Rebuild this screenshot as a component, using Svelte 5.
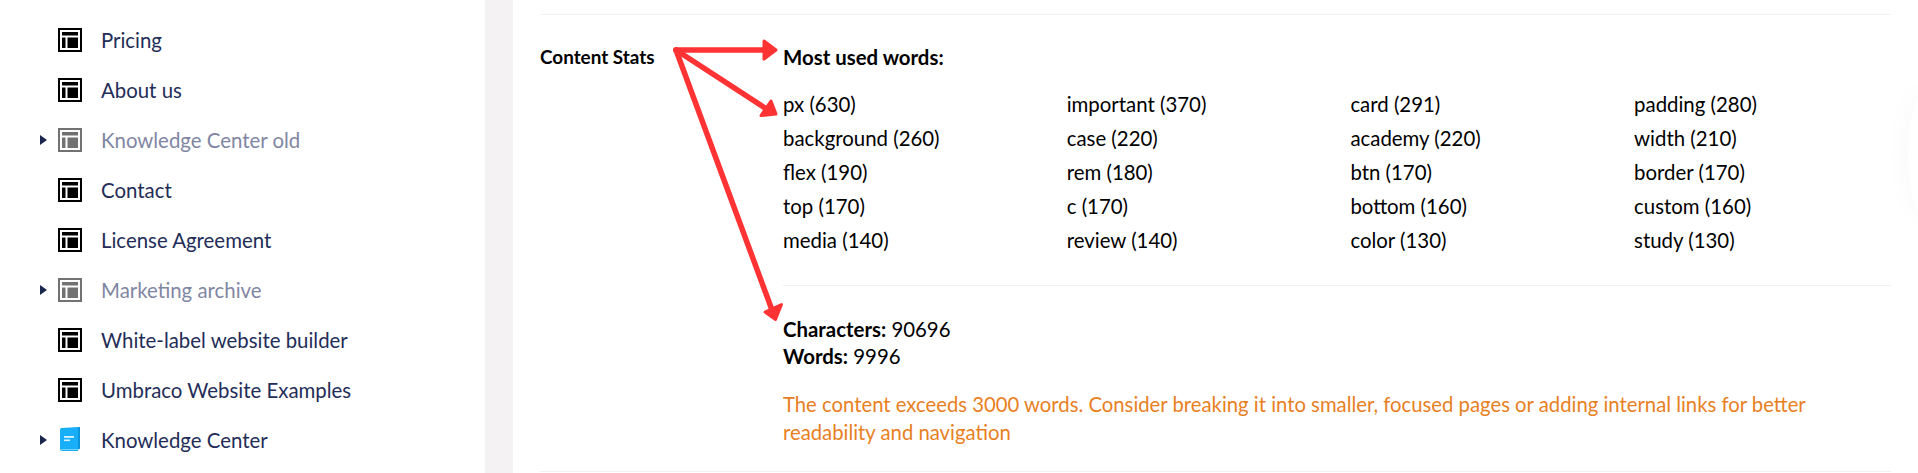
<script>
  const items = [
    { label: 'Pricing' },
    { label: 'About us' },
    { label: 'Knowledge Center old', caret: true, muted: true },
    { label: 'Contact' },
    { label: 'License Agreement' },
    { label: 'Marketing archive', caret: true, muted: true },
    { label: 'White-label website builder' },
    { label: 'Umbraco Website Examples' },
    { label: 'Knowledge Center', caret: true, book: true }
  ];
  const words = [
    'px (630)', 'important (370)', 'card (291)', 'padding (280)',
    'background (260)', 'case (220)', 'academy (220)', 'width (210)',
    'flex (190)', 'rem (180)', 'btn (170)', 'border (170)',
    'top (170)', 'c (170)', 'bottom (160)', 'custom (160)',
    'media (140)', 'review (140)', 'color (130)', 'study (130)'
  ];
</script>

<div class="page">
  <nav class="tree">
    {#each items as item}
      <div class="row" class:muted={item.muted}>
        <span class="caret">
          {#if item.caret}
            <svg width="7" height="10" viewBox="0 0 7 10"><path d="M0 0 L7 5 L0 10 Z" fill="#1b264f" /></svg>
          {/if}
        </span>
        {#if item.book}
          <svg class="icon" width="24" height="24" viewBox="0 0 24 24">
            <path d="M2 1.5 Q2 0 3.5 0 L20 -1 L22 -1 L22 20.5 L20 21.5 L20 23 L4 23 Q2 23 2 21 Z" fill="#18aef8" />
            <path d="M20 0 L22 -1 L22 20.5 L20 21.5 Z" fill="#0b93dc" />
            <rect x="3" y="21" width="17" height="0.8" fill="#8fdcff" />
            <rect x="6" y="8" width="10" height="1.8" fill="#d9f2ff" />
            <rect x="6" y="11.5" width="6" height="1.6" fill="#d9f2ff" />
          </svg>
        {:else}
          <svg class="icon" width="24" height="24" viewBox="0 0 24 24">
            <path fill-rule="evenodd" d="M0 0 H24 V24 H0 Z M2 2 V22 H22 V2 Z" fill="#000" />
            <rect x="4" y="4" width="16" height="3.5" fill="#000" />
            <rect x="4" y="9.5" width="3.5" height="10.5" fill="#000" />
            <rect x="9.5" y="9.5" width="10.5" height="10.5" fill="#000" />
          </svg>
        {/if}
        <span class="label">{item.label}</span>
      </div>
    {/each}
  </nav>

  <div class="gutter"></div>

  <main class="main">
    <section class="property">
      <div class="name">Content Stats</div>
      <div class="value">
        <div class="heading">Most used words:</div>
        <div class="words">
          {#each words as w}<span>{w}</span>{/each}
        </div>
        <div class="counts">
          <div><b>Characters:</b> 90696</div>
          <div><b>Words:</b> 9996</div>
          <p class="warn">The content exceeds 3000 words. Consider breaking it into smaller, focused pages or adding internal links for better readability and navigation</p>
        </div>
      </div>
    </section>
  </main>

  <div class="glow"></div>

  <svg class="arrows" width="1918" height="473" viewBox="0 0 1918 473">
    <g stroke="#ff3333" stroke-width="5.5" stroke-linecap="round" fill="none">
      <path d="M676 50 H765" />
      <path d="M676 50 L765 108" />
      <path d="M676 50 L772 310" />
    </g>
    <g fill="#ff3333" stroke="#ff3333" stroke-width="3" stroke-linejoin="round">
      <path d="M764 41 L776 50 L764 59 Z" />
      <path d="M771 101 L776 114 L761 115.5 Z" />
      <path d="M781.5 304.5 L775.5 319.5 L765 312 Z" />
    </g>
  </svg>
</div>

<style>
  :global(body) {
    margin: 0;
    background: #fff;
  }
  .page {
    position: relative;
    display: flex;
    width: 1918px;
    height: 473px;
    overflow: hidden;
    font-family: Lato, "Open Sans", sans-serif;
    background: #fff;
  }
  .tree {
    box-sizing: border-box;
    width: 485px;
    flex: none;
    padding-top: 15px;
  }
  .row {
    display: flex;
    align-items: center;
    height: 50px;
    padding-left: 40px;
    color: #232d58;
    font-size: 20.4px;
  }
  .row.muted {
    color: #7f86a3;
  }
  .row.muted .icon {
    opacity: 0.55;
  }
  .caret {
    display: flex;
    align-items: center;
    width: 18px;
    flex: none;
  }
  .icon {
    flex: none;
    margin-right: 19px;
    overflow: visible;
  }
  .label {
    line-height: 24px;
  }
  .gutter {
    width: 28px;
    flex: none;
    background: #f4f2f3;
  }
  .main {
    flex: 1;
    min-width: 0;
    box-sizing: border-box;
    padding: 14px 27px 0 27px;
  }
  .property {
    display: flex;
    box-sizing: border-box;
    height: 458px;
    padding-top: 30px;
    border-top: 1px solid #f3f3f3;
    border-bottom: 1px solid #f0f0f0;
    color: #000;
    font-size: 20.4px;
    line-height: 24px;
  }
  .name {
    width: 243px;
    flex: none;
    font-weight: 700;
    font-size: 18.9px;
  }
  .heading {
    font-weight: 700;
    margin-bottom: 18px;
  }
  .value {
    flex: 1;
    min-width: 0;
  }
  .words {
    display: grid;
    grid-template-columns: repeat(4, 283.7px);
    grid-auto-rows: 34px;
    padding-bottom: 28px;
    border-bottom: 1px solid #f0f0f0;
  }
  .words span {
    line-height: 34px;
  }
  .counts {
    padding-top: 30px;
    line-height: 27px;
  }
  .warn {
    margin: 21px 0 0;
    color: #e8801f;
    font-size: 20.3px;
    line-height: 27.5px;
    max-width: 1090px;
  }
  .arrows {
    position: absolute;
    left: 0;
    top: 0;
    pointer-events: none;
  }
  .glow {
    position: absolute;
    right: -30px;
    top: 90px;
    width: 40px;
    height: 130px;
    border-radius: 50%;
    box-shadow: 0 0 30px rgba(0, 0, 0, 0.03);
  }
</style>
